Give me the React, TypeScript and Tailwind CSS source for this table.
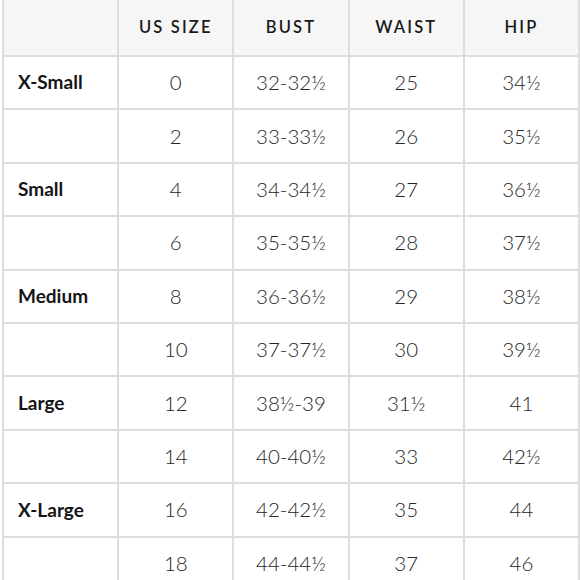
import React from "react";

const rows: [string, string, string, string, string][] = [
  ["X-Small", "0", "32-32½", "25", "34½"],
  ["", "2", "33-33½", "26", "35½"],
  ["Small", "4", "34-34½", "27", "36½"],
  ["", "6", "35-35½", "28", "37½"],
  ["Medium", "8", "36-36½", "29", "38½"],
  ["", "10", "37-37½", "30", "39½"],
  ["Large", "12", "38½-39", "31½", "41"],
  ["", "14", "40-40½", "33", "42½"],
  ["X-Large", "16", "42-42½", "35", "44"],
  ["", "18", "44-44½", "37", "46"],
];

const headers = ["", "US SIZE", "BUST", "WAIST", "HIP"];

export default function App() {
  return (
    <div className="w-[580px] h-[580px] overflow-hidden bg-white pl-[2px]" style={{ fontFamily: "Lato, 'Open Sans', sans-serif" }}>
      <div className="w-[578px] grid grid-cols-5 gap-[2px] bg-[#dddddd] border-x-2 border-[#dddddd]">
        {headers.map((h, i) => (
          <div
            key={"h" + i}
            className="h-[55px] bg-[#f6f6f6] flex items-center justify-center text-[16.5px] font-semibold tracking-[0.13em] text-[#1a1a1a]"
          >
            {h}
          </div>
        ))}
        {rows.map((r, ri) =>
          r.map((c, ci) =>
            ci === 0 ? (
              <div
                key={ri + "-" + ci}
                className="h-[51.4px] bg-white flex items-center pl-[14px] text-[19px] font-bold text-[#151515]"
              >
                {c}
              </div>
            ) : (
              <div
                key={ri + "-" + ci}
                className="h-[51.4px] bg-white flex items-center justify-center text-[20.5px] font-light text-[#262626]"
              >
                {c}
              </div>
            )
          )
        )}
      </div>
    </div>
  );
}
